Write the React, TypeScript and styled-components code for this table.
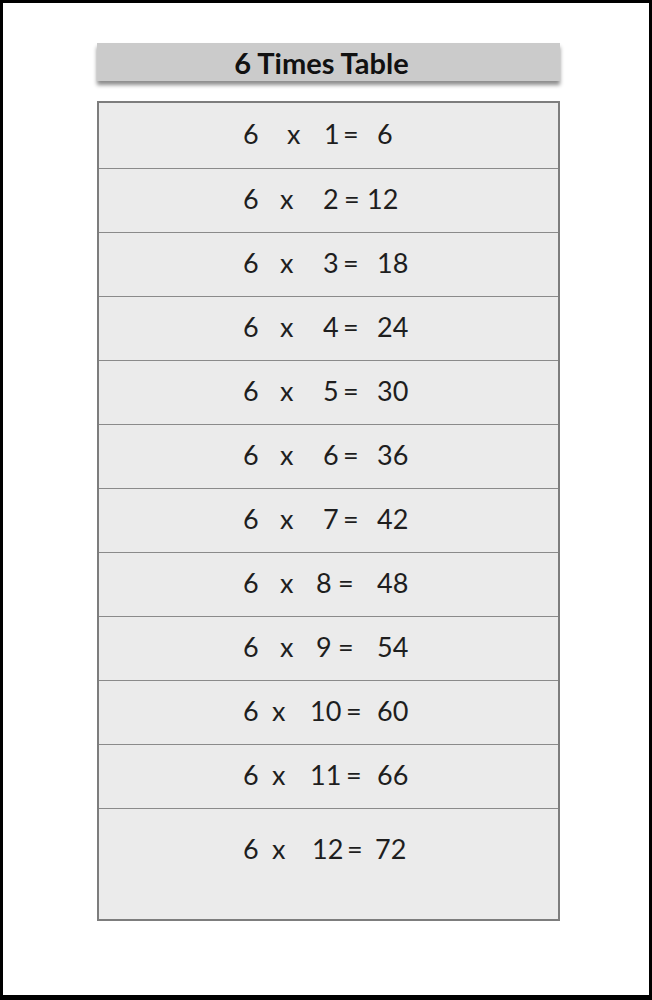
import React from 'react';
import styled, { createGlobalStyle } from 'styled-components';

const GlobalStyle = createGlobalStyle`
  html, body {
    margin: 0;
    padding: 0;
    background: #ffffff;
  }
  * {
    box-sizing: border-box;
  }
`;

const Page = styled.div`
  width: 652px;
  height: 1000px;
  border: 3px solid #000000;
  border-bottom-width: 5px;
  background: #ffffff;
  padding: 40px 0 0 94px;
  font-family: Lato, "Open Sans", sans-serif;
`;

const Header = styled.div`
  width: 463px;
  height: 38px;
  background: #cbcbcb;
  box-shadow: 0 4px 4px rgba(0, 0, 0, 0.45);
  display: flex;
  align-items: center;
  justify-content: center;
  padding-right: 14px;
`;

const Title = styled.h1`
  margin: 0;
  font-size: 29px;
  font-weight: 700;
  color: #111111;
  letter-spacing: 0;
`;

const Table = styled.div`
  margin-top: 20px;
  width: 463px;
  border: 2px solid #7d7d7d;
  background: #ebebeb;
  display: flex;
  flex-direction: column;
`;

const Row = styled.div<{ $cols: string; $first?: boolean; $last?: boolean }>`
  height: ${(p) => (p.$first ? 66 : p.$last ? 110 : 64)}px;
  border-bottom: ${(p) => (p.$last ? 'none' : '1px solid #8a8a8a')};
  display: grid;
  grid-template-columns: ${(p) => p.$cols};
  align-items: ${(p) => (p.$last ? 'start' : 'center')};
  padding: ${(p) => (p.$last ? '23px 0 0 144px' : '0 0 4px 144px')};
  font-size: 27px;
  line-height: 34px;
  color: #1e1e1e;
`;

const Token = styled.span`
  white-space: nowrap;
`;

type Line = { b: number; cols: string };

const lines: Line[] = [
  { b: 1, cols: '44px 37px 19px 34px auto' },
  { b: 2, cols: '37px 43px 21px 23px auto' },
  { b: 3, cols: '37px 43px 20px 34px auto' },
  { b: 4, cols: '37px 43px 20px 34px auto' },
  { b: 5, cols: '37px 43px 20px 34px auto' },
  { b: 6, cols: '37px 43px 20px 34px auto' },
  { b: 7, cols: '37px 43px 20px 34px auto' },
  { b: 8, cols: '37px 36px 22px 39px auto' },
  { b: 9, cols: '37px 36px 22px 39px auto' },
  { b: 10, cols: '29px 38px 36px 31px auto' },
  { b: 11, cols: '29px 38px 36px 31px auto' },
  { b: 12, cols: '29px 40px 35px 28px auto' },
];

const App = () => (
  <>
    <GlobalStyle />
    <Page>
      <Header>
        <Title>6 Times Table</Title>
      </Header>
      <Table>
        {lines.map((l, i) => (
          <Row
            key={l.b}
            $cols={l.cols}
            $first={i === 0}
            $last={i === lines.length - 1}
          >
            <Token>6</Token>
            <Token>x</Token>
            <Token>{l.b}</Token>
            <Token>=</Token>
            <Token>{6 * l.b}</Token>
          </Row>
        ))}
      </Table>
    </Page>
  </>
);

export default App;
